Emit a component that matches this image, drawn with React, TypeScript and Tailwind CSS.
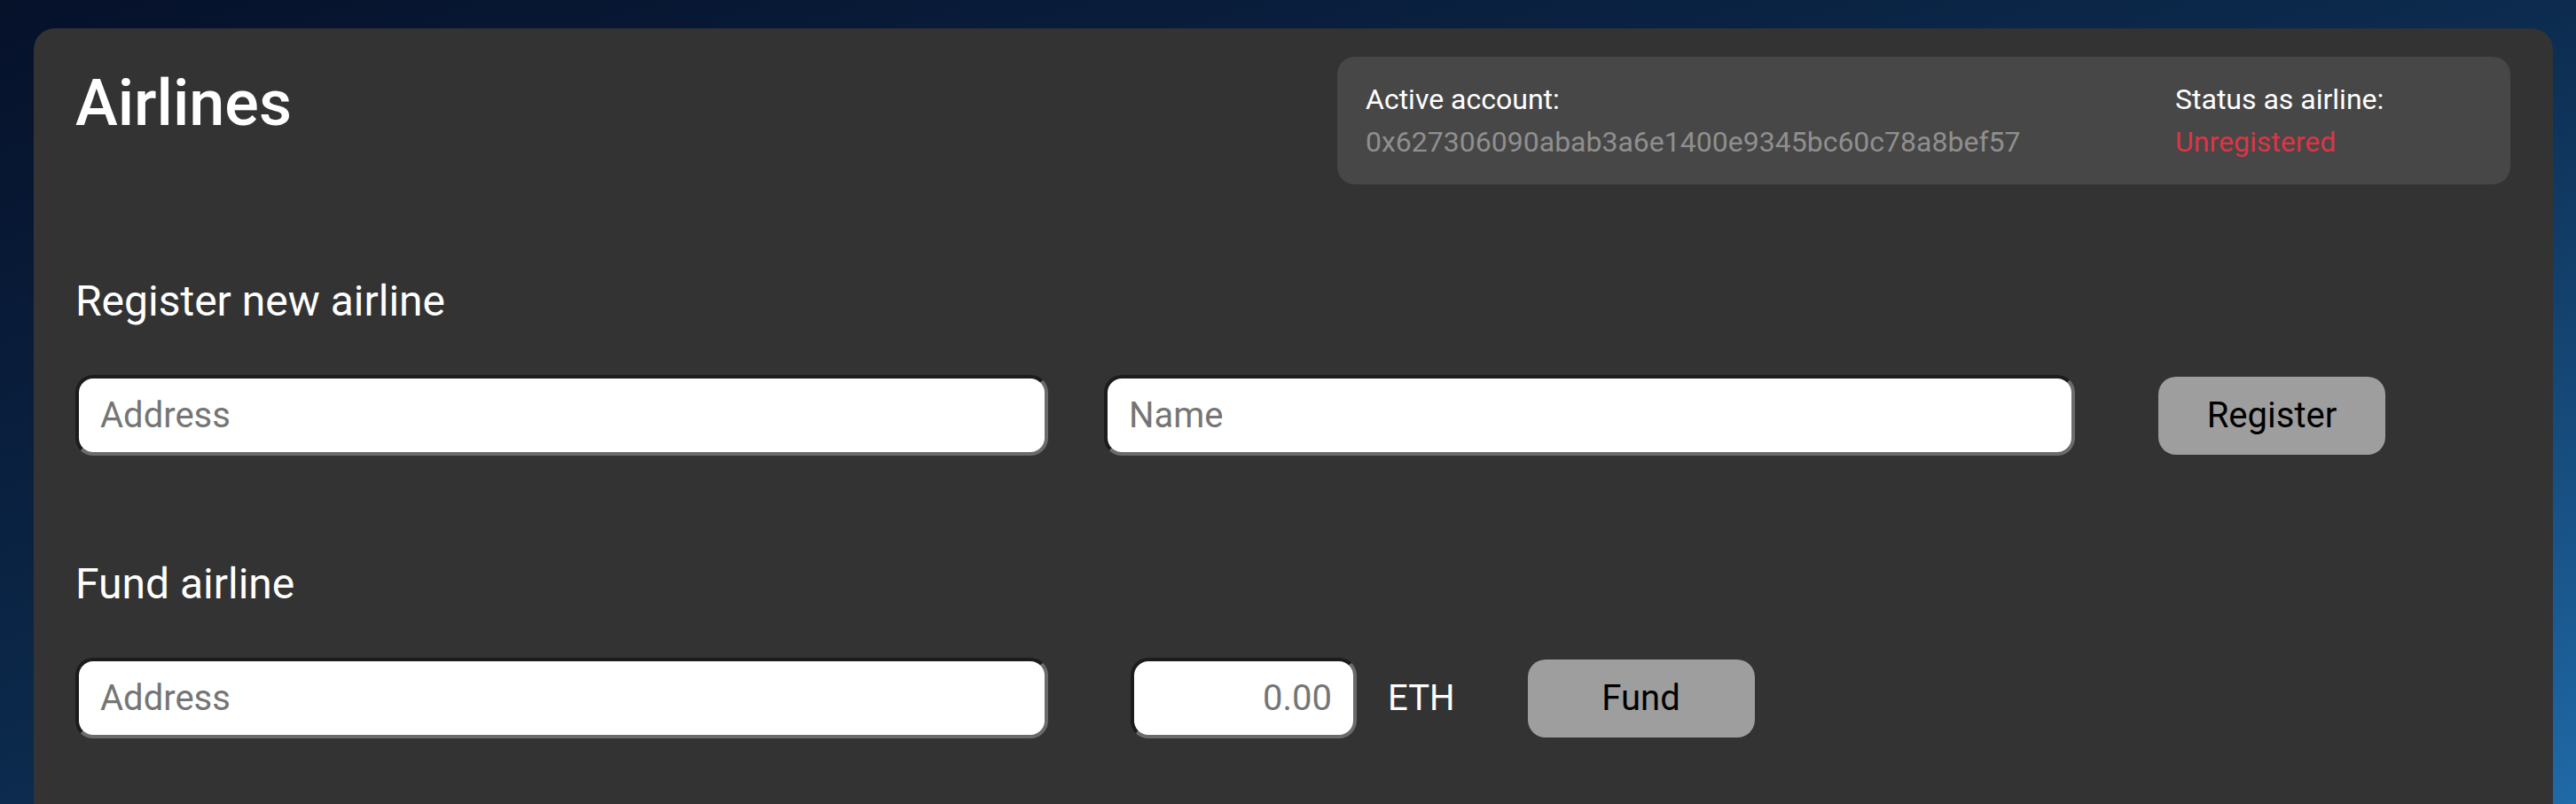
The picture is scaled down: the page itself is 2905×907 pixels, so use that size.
import { useState } from "react";

// shared input look: old-style inset border, rounded
const inputClass =
  "h-[91px] rounded-[20px] border-[4px] border-t-[#1c1c1c] border-l-[#1c1c1c] border-r-[#6b6b6b] border-b-[#6b6b6b] bg-white px-[24px] text-[40px] text-black outline-none placeholder:text-[#757575]";

const buttonClass =
  "h-[88px] w-[256px] rounded-[20px] bg-[#9e9e9e] text-[40px] text-black";

export default function App() {
  const [newAddress, setNewAddress] = useState("");
  const [newName, setNewName] = useState("");
  const [fundAddress, setFundAddress] = useState("");
  const [amount, setAmount] = useState("");

  return (
    <div className="h-screen overflow-hidden bg-linear-to-br from-[#06112a] via-[#0c2b4e] to-[#1f6aa8] pt-[32px] pl-[38px] font-['Roboto',sans-serif]">
      <div className="w-[2841px] rounded-[24px] bg-[#333333] pt-[32px] pr-[48px] pb-[160px] pl-[47px] text-white">
        {/* Header */}
        <div className="flex items-start justify-between">
          <h1 className="mt-[17px] text-[72px] leading-[72px] font-medium">
            Airlines
          </h1>
          <div className="grid h-[144px] w-[1323px] grid-cols-[913px_1fr] rounded-[20px] bg-[#484747] px-[32px] py-[24px] text-[32px] leading-[48px]">
            <div>
              <div>Active account:</div>
              <div className="text-[#8f8f8f]">
                0x627306090abab3a6e1400e9345bc60c78a8bef57
              </div>
            </div>
            <div>
              <div>Status as airline:</div>
              <div className="text-[#dc3545]">Unregistered</div>
            </div>
          </div>
        </div>

        {/* Register */}
        <h2 className="mt-[103px] text-[48px] leading-[58px]">
          Register new airline
        </h2>
        <div className="mt-[54px] flex items-center">
          <input
            className={inputClass + " w-[1097px]"}
            placeholder="Address"
            value={newAddress}
            onChange={(e) => setNewAddress(e.target.value)}
          />
          <input
            className={inputClass + " ml-[63px] w-[1095px]"}
            placeholder="Name"
            value={newName}
            onChange={(e) => setNewName(e.target.value)}
          />
          <button className={buttonClass + " ml-[94px]"}>Register</button>
        </div>

        {/* Fund */}
        <h2 className="mt-[116px] text-[48px] leading-[58px]">Fund airline</h2>
        <div className="mt-[54px] flex items-center">
          <input
            className={inputClass + " w-[1097px]"}
            placeholder="Address"
            value={fundAddress}
            onChange={(e) => setFundAddress(e.target.value)}
          />
          <input
            className={inputClass + " ml-[93px] w-[255px] text-right"}
            placeholder="0.00"
            value={amount}
            onChange={(e) => setAmount(e.target.value)}
          />
          <span className="ml-[35px] text-[40px]">ETH</span>
          <button className={buttonClass + " ml-[82px]"}>Fund</button>
        </div>
      </div>
    </div>
  );
}
